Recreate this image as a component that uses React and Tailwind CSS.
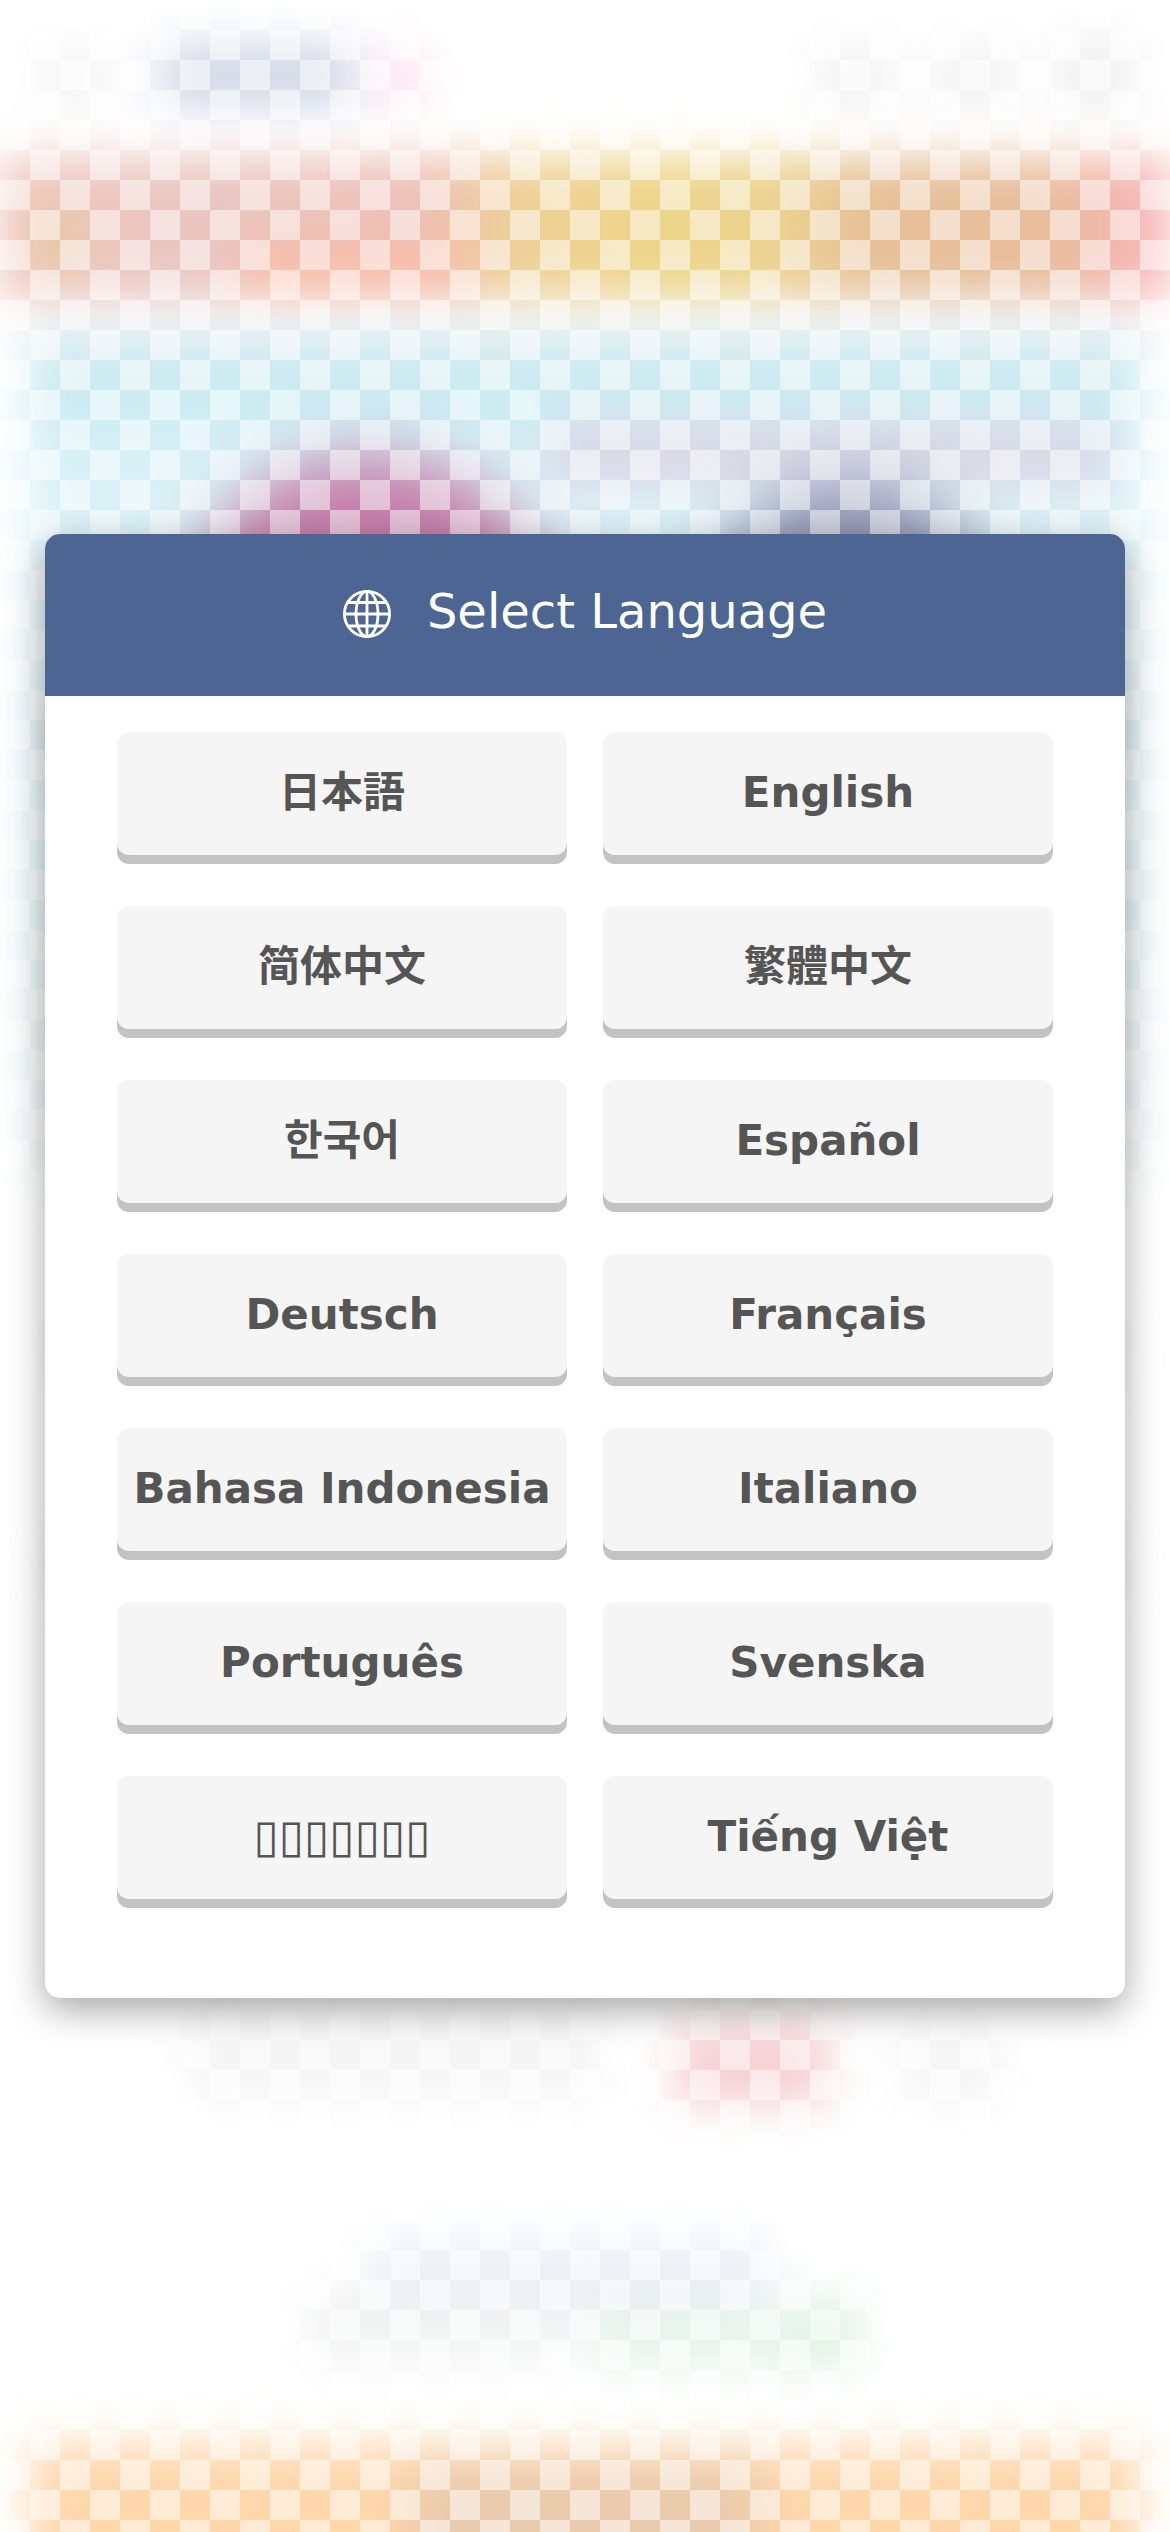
import React from 'react';
import clsx from 'clsx';

const languages = [
    { code: 'ja', label: '日本語' },
    { code: 'en', label: 'English' },
    { code: 'zh-Hans', label: '简体中文' },
    { code: 'zh-Hant', label: '繁體中文' },
    { code: 'ko', label: '한국어' },
    { code: 'es', label: 'Español' },
    { code: 'de', label: 'Deutsch' },
    { code: 'fr', label: 'Français' },
    { code: 'id', label: 'Bahasa Indonesia' },
    { code: 'it', label: 'Italiano' },
    { code: 'pt', label: 'Português' },
    { code: 'sv', label: 'Svenska' },
    { code: 'th', label: '▯▯▯▯▯▯▯', name: 'ภาษาไทย' },
    { code: 'vi', label: 'Tiếng Việt' },
];

const GlobeIcon = () => (
    <svg className="size-12" viewBox="0 0 48 48" fill="none" stroke="currentColor" strokeWidth="2.8" aria-hidden="true">
        <circle cx="24" cy="24" r="22.6" />
        <ellipse cx="24" cy="24" rx="11" ry="22.6" />
        <path d="M24 1.4v45.2M1.4 24h45.2M5 12.5h38M5 36h38" />
    </svg>
);

const Backdrop = () => (
    <div className="absolute inset-0 overflow-hidden" aria-hidden="true">
        <svg className="size-full" viewBox="0 0 1170 2532" preserveAspectRatio="none">
            <defs>
                <filter id="soft" x="-50%" y="-50%" width="200%" height="200%">
                    <feGaussianBlur stdDeviation="23" />
                </filter>
                <filter id="softer" x="-50%" y="-50%" width="200%" height="200%">
                    <feGaussianBlur stdDeviation="32" />
                </filter>
                <linearGradient id="warm" x1="0" x2="1">
                    <stop offset="0" stopColor="#f0c4bc" />
                    <stop offset="0.15" stopColor="#e9c6c1" />
                    <stop offset="0.37" stopColor="#edc0b6" />
                    <stop offset="0.43" stopColor="#efcf98" />
                    <stop offset="0.55" stopColor="#edd589" />
                    <stop offset="0.66" stopColor="#ecd38e" />
                    <stop offset="0.74" stopColor="#e6c198" />
                    <stop offset="0.9" stopColor="#e8bd9c" />
                    <stop offset="0.97" stopColor="#f6b5b3" />
                </linearGradient>
                <linearGradient id="sea" x1="0" y1="0" x2="0" y2="1">
                    <stop offset="0" stopColor="#e0ecf0" />
                    <stop offset="0.07" stopColor="#c6eaf1" />
                    <stop offset="0.14" stopColor="#d6f0f6" />
                    <stop offset="0.3" stopColor="#dff4f8" />
                    <stop offset="0.7" stopColor="#dbf0f3" />
                    <stop offset="1" stopColor="#f2f6f7" />
                </linearGradient>
            </defs>

            {/* Top strip */}
            <g filter="url(#soft)">
                <rect x="160" y="45" width="195" height="62" fill="#cfd6e5" />
                <rect x="375" y="50" width="50" height="55" fill="#fde0ec" />
                <rect x="40" y="50" width="70" height="60" fill="#f4f4f4" />
                <rect x="815" y="45" width="80" height="65" fill="#f3f3f3" />
                <rect x="935" y="45" width="80" height="65" fill="#f2f2f2" />
                <rect x="1055" y="40" width="80" height="70" fill="#f0f0f0" />
            </g>

            {/* Main scene */}
            <g filter="url(#soft)">
                <rect x="28" y="325" width="1114" height="855" fill="url(#sea)" />
                <rect x="0" y="158" width="1170" height="142" fill="url(#warm)" />
                <rect x="35" y="205" width="50" height="70" fill="#e6cba0" />
                <rect x="240" y="245" width="220" height="50" fill="#f9bba6" />
                <rect x="550" y="425" width="560" height="60" fill="#dcd5e4" />
                <rect x="60" y="690" width="1050" height="80" fill="#b9c6d4" />
                <rect x="60" y="1020" width="1050" height="80" fill="#dde5ea" />
                <rect x="60" y="1330" width="1050" height="40" fill="#ececec" />
                <rect x="60" y="1545" width="1050" height="40" fill="#e4e4e4" />
            </g>
            <g filter="url(#softer)">
                <ellipse cx="370" cy="600" rx="172" ry="144" fill="#c47da8" />
                <ellipse cx="850" cy="610" rx="140" ry="126" fill="#8e8fae" />
            </g>

            {/* Below the dialog */}
            <g filter="url(#soft)">
                <rect x="190" y="2010" width="410" height="85" fill="#f4f4f4" />
                <rect x="675" y="2025" width="155" height="80" fill="#f6cfd2" />
                <rect x="900" y="2030" width="100" height="70" fill="#f4f4f4" />
                <rect x="370" y="2240" width="400" height="85" fill="#eceff4" />
                <rect x="310" y="2290" width="250" height="70" fill="#f1f2f2" />
                <rect x="590" y="2305" width="250" height="65" fill="#e7f4ec" />
                <rect x="800" y="2295" width="60" height="70" fill="#dff2e3" />
                <rect x="30" y="2445" width="1110" height="180" fill="#fed7ab" />
                <rect x="410" y="2465" width="350" height="120" fill="#e8caac" />
            </g>
        </svg>
        {/* 30px checkerboard veil */}
        <div className="absolute inset-0 bg-[repeating-conic-gradient(transparent_0_25%,rgba(255,255,255,0.5)_0_50%)] bg-size-[60px_60px]" />
    </div>
);

const App = () => {
    return (
        <main className="relative flex min-h-screen items-center justify-center overflow-hidden bg-white px-[45px] font-['DejaVu_Sans','Noto_Sans_CJK_JP',sans-serif]">
            <Backdrop />

            <section
                aria-labelledby="dialog-title"
                className="relative w-full overflow-hidden rounded-[15px] bg-white shadow-[0_12px_36px_rgba(0,0,0,0.35)]"
            >
                <header className="flex h-[162px] items-center justify-center bg-[#4c6592] pb-2 text-white">
                    <div className="flex items-end gap-9">
                        <GlobeIcon />
                        <h1 id="dialog-title" className="text-5xl leading-[54px]">Select Language</h1>
                    </div>
                </header>

                <div className="grid grid-cols-2 gap-x-9 gap-y-[51px] px-[72px] pt-9 pb-[99px]">
                    {languages.map(({ code, label, name }) => (
                        <button
                            key={code}
                            type="button"
                            lang={code}
                            aria-label={name}
                            className={clsx(
                                'h-[123px] cursor-pointer rounded-xl bg-[#f5f5f5] pb-0.5 whitespace-nowrap text-[#555] shadow-[0_9px_0_#c3c3c3]',
                                name ? 'text-[46px] font-normal' : 'text-[42px] font-bold'
                            )}
                        >
                            {label}
                        </button>
                    ))}
                </div>
            </section>
        </main>
    );
};

export default App;
